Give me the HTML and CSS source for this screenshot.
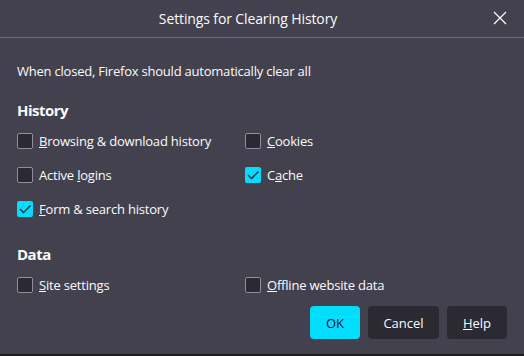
FILE: index.html
```html
<!DOCTYPE html>
<html>
<head>
<meta charset="utf-8">
<link rel="stylesheet" href="styles.css">
</head>
<body>
<div class="dialog">
  <div class="titlebar">
    <span class="title">Settings for Clearing History</span>
    <span class="close">
      <svg width="14" height="14" viewBox="0 0 14 14"><path d="M1 1 L13 13 M13 1 L1 13" stroke="#fbfbfe" stroke-width="1.3" fill="none"/></svg>
    </span>
  </div>
  <div class="content">
    <p class="intro">When closed, Firefox should automatically clear all</p>
    <h2 class="heading first">History</h2>
    <div class="grid">
      <label class="item"><span class="box"></span><span><u>B</u>rowsing &amp; download history</span></label>
      <label class="item"><span class="box"></span><span><u>C</u>ookies</span></label>
      <label class="item"><span class="box"></span><span>Active <u>l</u>ogins</span></label>
      <label class="item"><span class="box checked"><svg width="16" height="16" viewBox="0 0 16 16"><path d="M3 8 L6.5 11.5 L13.5 4.5" stroke="#2b2a33" stroke-width="1.4" fill="none"/></svg></span><span>C<u>a</u>che</span></label>
      <label class="item"><span class="box checked"><svg width="16" height="16" viewBox="0 0 16 16"><path d="M3 8 L6.5 11.5 L13.5 4.5" stroke="#2b2a33" stroke-width="1.4" fill="none"/></svg></span><span><u>F</u>orm &amp; search history</span></label>
    </div>
    <h2 class="heading second">Data</h2>
    <div class="grid">
      <label class="item"><span class="box"></span><span><u>S</u>ite settings</span></label>
      <label class="item"><span class="box"></span><span><u>O</u>ffline website data</span></label>
    </div>
    <div class="buttons">
      <button class="btn primary">OK</button>
      <button class="btn cancel">Cancel</button>
      <button class="btn help"><u>H</u>elp</button>
    </div>
  </div>
</div>
<div class="under"></div>
</body>
</html>
```
FILE: styles.css
```css
html, body {
  margin: 0;
  padding: 0;
  background: #1c1b22;
}
body {
  width: 524px;
  height: 356px;
  overflow: hidden;
  font-family: "Open Sans", "Noto Sans", sans-serif;
  color: #fbfbfe;
}
.dialog {
  width: 524px;
  height: 354px;
  background: #42414d;
  display: flex;
  flex-direction: column;
}
.titlebar {
  position: relative;
  height: 37px;
  border-bottom: 1px solid #6c6b75;
  display: flex;
  align-items: center;
  justify-content: center;
  box-sizing: content-box;
}
.title {
  font-size: 14px;
  letter-spacing: -0.12px;
  margin-left: -28px;
  margin-top: -1px;
}
.close {
  position: absolute;
  right: 17px;
  top: 11px;
  width: 14px;
  height: 14px;
  display: flex;
}
.content {
  padding: 0 17px;
}
.intro {
  margin: 24px 0 0;
  font-size: 13px;
  line-height: 18px;
  letter-spacing: -0.22px;
}
.heading {
  margin: 0;
  font-size: 15px;
  font-weight: 700;
  line-height: 22px;
  letter-spacing: -0.5px;
}
.heading.first { margin-top: 19px; }
.heading.second { margin-top: 17px; }
.grid {
  margin-top: 3px;
  display: grid;
  grid-template-columns: 228px 1fr;
  grid-auto-rows: 34px;
}
.item {
  display: flex;
  align-items: center;
  gap: 6px;
  font-size: 13px;
  letter-spacing: -0.2px;
}
.box {
  width: 16px;
  height: 16px;
  box-sizing: border-box;
  border: 1px solid #8f8f9d;
  border-radius: 2px;
  background: #2b2a33;
  display: flex;
  flex: none;
}
.box.checked {
  border: none;
  background: #00ddff;
}
.buttons {
  margin-top: 4px;
  display: flex;
  justify-content: flex-end;
  gap: 8px;
}
.btn {
  height: 33px;
  border: none;
  border-radius: 4px;
  font-family: inherit;
  font-size: 13px;
  color: #fbfbfe;
  background: #2b2a33;
  padding: 0;
}
.btn.primary {
  width: 50px;
  background: #00ddff;
  color: #15141a;
}
.btn.cancel { width: 71px; }
.btn.help { width: 60px; }
.under {
  height: 2px;
  background: #1c1b22;
}
```
